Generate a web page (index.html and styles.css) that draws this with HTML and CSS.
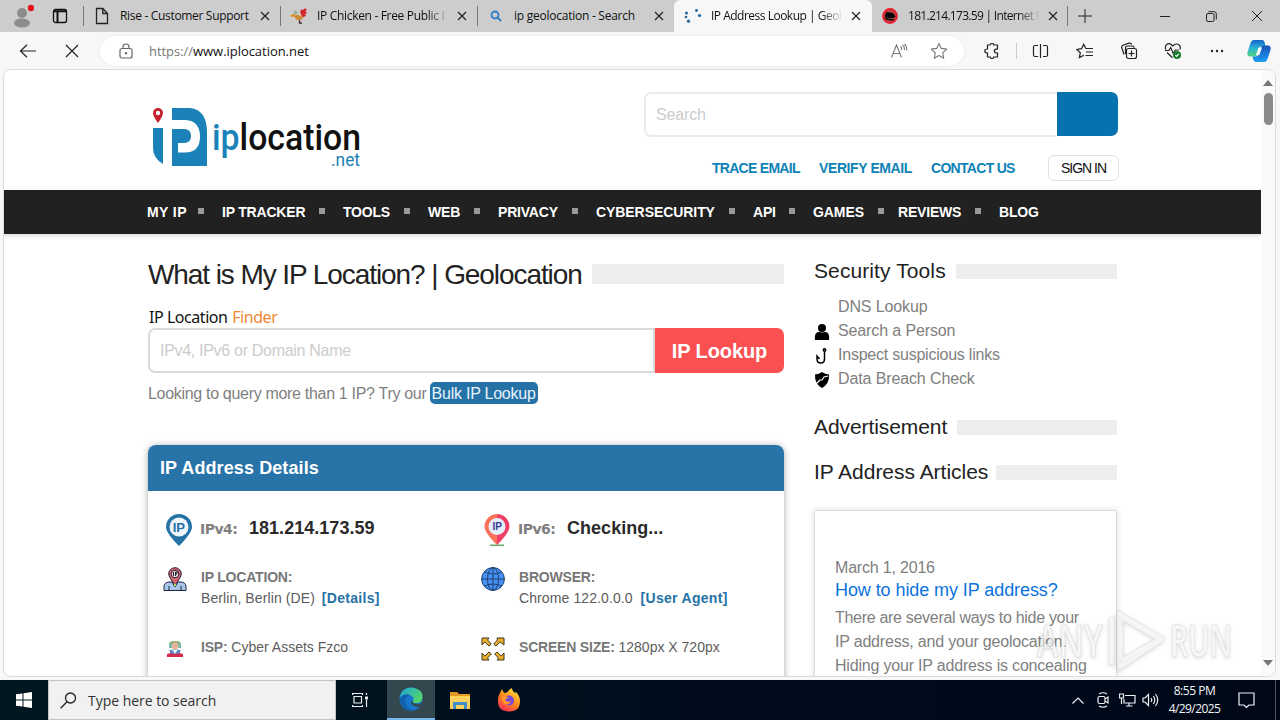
FILE: index.html
```
<!DOCTYPE html>
<html lang="en">
<head>
    <meta charset="utf-8">
    <title>IP Address Lookup | Geolocation</title>
    <link rel="stylesheet" href="styles.css">
</head>
<body>
<div class="tab-bar">
    <div class="tab-tools">
        <svg width="24" height="26" viewBox="0 0 24 26"><circle cx="12" cy="10" r="5" fill="#8d8c8b"/><ellipse cx="12" cy="20" rx="8" ry="4.6" fill="#8d8c8b"/><circle cx="21" cy="5" r="3.2" fill="#e0151c"/></svg>
        <svg width="16" height="16" viewBox="0 0 16 16" fill="none" stroke="#111" stroke-width="1.3"><rect x="1.5" y="1.5" width="13" height="13" rx="2"/><path d="M1.5 3.2h13M5.5 3v11.5" stroke-width="2"/></svg>
    </div>
    <div class="tab">
        <span class="tab-icon"><svg width="14" height="18" viewBox="0 0 14 18" fill="none" stroke="#222" stroke-width="1.3"><path d="M1.5 1.5h6.3l4.7 5v10h-11zM7.8 1.5v5h4.7"/></svg></span>
        <span class="tab-title t1">Rise - Customer Support</span>
        <svg class="x" viewBox="0 0 10 10"><path d="M1 1l8 8M9 1L1 9"/></svg>
    </div>
    <div class="tab">
        <span class="tab-icon"><svg width="18" height="16" viewBox="0 0 18 16"><path d="M4 8l4-1.500 2 1.500 4-3-1 5-3 2.500-4-1z" fill="#cf8a35"/><path d="M10 4.500l1-3 2 .5L14.500.5 17 1l-1.500 2 1.500 2-2 1 1 2-3 1z" fill="#d3222a"/><path d="M0 7.500l5-2v3L2 9z" fill="#e28a1c"/><circle cx="5.500" cy="4.500" r="2" fill="#97b59a"/><path d="M9.500 12v3h2.500" stroke="#40323c" stroke-width="1.300" fill="none"/></svg></span>
        <span class="tab-title fade t1">IP Chicken - Free Public I</span>
        <svg class="x" viewBox="0 0 10 10"><path d="M1 1l8 8M9 1L1 9"/></svg>
    </div>
    <div class="tab">
        <span class="tab-icon"><svg width="12" height="12" viewBox="0 0 12 12" fill="none" stroke="#2f7fc8" stroke-width="1.8"><circle cx="5" cy="5" r="3.5"/><path d="M7.5 7.5l3.5 3.5"/></svg></span>
        <span class="tab-title t2">ip geolocation - Search</span>
        <svg class="x" viewBox="0 0 10 10"><path d="M1 1l8 8M9 1L1 9"/></svg>
    </div>
    <div class="tab active">
        <span class="tab-icon"><svg width="18" height="16" viewBox="0 0 18 16" fill="#22649c"><circle cx="2.5" cy="5" r="1.5"/><circle cx="2" cy="9" r="1.3"/><circle cx="4.5" cy="13.2" r="1.6"/><circle cx="12.5" cy="2.5" r="1.4"/><circle cx="15.5" cy="7.5" r="1.6"/></svg></span>
        <span class="tab-title fade t3">IP Address Lookup | Geol</span>
        <svg class="x" viewBox="0 0 10 10"><path d="M1 1l8 8M9 1L1 9"/></svg>
    </div>
    <div class="tab last-tab">
        <span class="tab-icon"><svg width="16" height="16" viewBox="0 0 16 16"><circle cx="8" cy="8" r="6.800" fill="#a8474d" stroke="#e8202e" stroke-width="2.200"/><path d="M3 7q1-4 4-2.500l4 .5 2.500 3.500q-2 2.500-6 1.500L3 9z" fill="#050505"/><path d="M3 10q4 2.500 9 1.500" stroke="#111" stroke-width="1.500" fill="none"/></svg></span>
        <span class="tab-title fade t4">181.214.173.59 | Internet P</span>
        <svg class="x" viewBox="0 0 10 10"><path d="M1 1l8 8M9 1L1 9"/></svg>
    </div>
    <div class="window-buttons">
        <svg width="14" height="14" viewBox="0 0 14 14"><path d="M0 7h14M7 0v14"/></svg>
        <svg width="10" height="10" viewBox="0 0 10 10"><path d="M0 5.500h10"/></svg>
        <svg width="11" height="11" viewBox="0 0 11 11"><rect x=".5" y="2.500" width="7.500" height="8" rx="1.500"/><path d="M2.500 .7h5.500q2.300 0 2.300 2.300v5.500"/></svg>
        <svg width="10" height="10" viewBox="0 0 10 10"><path d="M0 0l10 10M10 0L0 10"/></svg>
    </div>
</div>

<div class="toolbar">
    <svg class="back" width="18" height="14" viewBox="0 0 18 14"><path d="M1.500 7h15.500M8 .7L1.500 7 8 13.300"/></svg>
    <svg class="stop" width="14" height="14" viewBox="0 0 14 14"><path d="M1 1l12 12M13 1L1 13"/></svg>
    <div class="address">
        <svg width="14" height="16" viewBox="0 0 14 16" fill="none" stroke="#666"><rect x="1" y="5.500" width="12" height="9.500" rx="2"/><path d="M4 5.500V4q0-3 3-3t3 3v1.500"/><circle cx="7" cy="10.300" r=".6" fill="#666"/></svg>
        <span class="url"><span class="scheme">https://</span>www.iplocation.net</span>
        <svg width="18" height="16" viewBox="0 0 18 16" fill="none" stroke="#777" stroke-width="1.100"><path d="M1.500 14.500L6.500 2l5 12.500M3.200 10.500h6.600M10.500 3.500q1.500 1.300 1 3.500M12.500 2q2.500 2 1.800 5M14.500 1q3 3 2 6.500"/></svg>
        <svg width="18" height="18" viewBox="0 0 18 18" fill="none" stroke="#777" stroke-width="1.100" stroke-linejoin="round"><path d="M9 1.500l2.300 4.900 5.400.7-4 3.700 1 5.400L9 13.600l-4.700 2.600 1-5.400-4-3.700 5.400-.7z"/></svg>
    </div>
    <span class="tool"><svg width="16" height="16" viewBox="0 0 16 16"><path d="M3.500 2h2.700q0-1.500 1.800-1.500T9.800 2h3.700v3.800q-3.200 0-3.200 2.200t3.200 2.200V14H9.800q0 1.500-1.800 1.500T6.200 14H3.500v-4Q.8 10 .8 8t2.700-2z"/></svg></span>
    <span class="tool-split"></span>
    <span class="tool"><svg width="17" height="16" viewBox="0 0 17 16"><path d="M6 2.500H3Q1.500 2.500 1.500 4v8q0 1.500 1.500 1.500h3M11 2.500h3q1.500 0 1.500 1.500v8q0 1.500-1.500 1.500h-3M8.500 1v14"/></svg></span>
    <span class="tool favs"><svg width="18" height="16" viewBox="0 0 18 16"><path d="M9.800 5.500L7.700 1.300 5.600 5.700l-4.800.7 3.500 3.300-.9 4.900 4.500-2.400M9.800 5.500h7.200M10 9h7M9.500 12.500H17"/></svg></span>
    <span class="tool"><svg width="18" height="18" viewBox="0 0 18 18"><path d="M4 12.500L2 6.500Q1 4 3.500 3L9 1.200q2-.5 2.800 1.300"/><path d="M5.500 12V6Q5.500 4 7.500 4H12q2 0 2 1.800"/><rect x="6.500" y="6.500" width="10" height="10" rx="2"/><path d="M11.500 8.500v6M8.500 11.500h6"/></svg></span>
    <span class="tool"><svg width="18" height="18" viewBox="0 0 18 18"><path d="M1.800 7.500Q.5 4 3 2.300T8.700 4q3-3 5.700-1.500T16 7.500M3 10.500l5.500 5.200M1 8.500h4l1.700-3 2.600 6 2-3.500h3.500"/><circle cx="13" cy="13" r="4" fill="#187c28" stroke="none"/><path d="M11.300 13l1.200 1.300 2.300-2.500" stroke="#fff"/></svg></span>
    <span class="tool"><svg width="14" height="4" viewBox="0 0 14 4"><g fill="#222" stroke="none"><circle cx="2" cy="2" r="1.200"/><circle cx="7" cy="2" r="1.200"/><circle cx="12" cy="2" r="1.200"/></g></svg></span>
    <span class="tool copilot">
        <svg width="24" height="24" viewBox="0 0 24 24">
            <defs>
                <linearGradient id="cpa" x1="0" y1="0" x2="0" y2="1"><stop offset="0" stop-color="#1565c8"/><stop offset=".5" stop-color="#28b6d4"/><stop offset="1" stop-color="#52d17b"/></linearGradient>
                <linearGradient id="cpb" x1="0" y1="0" x2="0" y2="1"><stop offset="0" stop-color="#1c51b8"/><stop offset="1" stop-color="#1ba0f4"/></linearGradient>
            </defs>
            <path d="M7 1h8q2 0 2.500 2l1 4h-3q-2.500 0-3.100 2.500L10.500 15q-.8 2.500-3 2.500H3Q-.3 17.500.5 13L3.500 4Q4.500 1 7 1z" fill="url(#cpa)" stroke="none"/>
            <path d="M17 23H9q-2 0-2.500-2L5.500 17.500h3q2.500 0 3.200-2.500L13.500 9q.8-2.500 3-2.500H21q3.300 0 2.500 4.500l-3 9q-1 3-3.500 3z" fill="url(#cpb)" stroke="none"/>
            <path d="M11.500 8.500h3.500l-2.700 7.500H9z" fill="#fff" stroke="none"/>
        </svg>
    </span>
</div>

<div class="viewport">
    <div class="page">
        <div class="header">
            <svg class="logo" width="212" height="68" viewBox="0 0 212 68">
                <path d="M1 24h10v36Q1 54 1 44z" fill="#1a82b8"/>
                <path d="M20 4h18q17 2 17 24v34H20z" fill="#1a82b8"/>
                <path d="M20 16h12q16 0 16 16.500T32 48.500h-6V39h6q7 0 7-7t-7-7H20z" fill="#fff"/>
                <path d="M20 25h6v23.500h-6z" fill="#1a82b8"/>
                <path d="M6 4a5 5 0 0 1 5 5q0 3-5 10-5-7-5-10a5 5 0 0 1 5-5z" fill="#c4202d"/>
                <circle cx="6" cy="9" r="2.200" fill="#fff"/>
                <text class="logo-text" x="60" y="46" textLength="149" lengthAdjust="spacingAndGlyphs"><tspan fill="#1a82b8">ip</tspan><tspan fill="#111">location</tspan></text>
                <text class="logo-net" x="179" y="62" textLength="29" lengthAdjust="spacingAndGlyphs">.net</text>
            </svg>
            <div class="header-side">
                <div class="site-search">
                    <span class="site-search-input">Search</span>
                    <span class="site-search-button"></span>
                </div>
                <div class="top-links">
                    <a class="trace">TRACE EMAIL</a>
                    <a class="verify">VERIFY EMAIL</a>
                    <a class="contact">CONTACT US</a>
                    <span class="sign-in">SIGN IN</span>
                </div>
            </div>
        </div>

        <div class="nav">
            <span class="wide">MY IP</span>
            <span>IP TRACKER</span>
            <span>TOOLS</span>
            <span>WEB</span>
            <span>PRIVACY</span>
            <span class="even">CYBERSECURITY</span>
            <span>API</span>
            <span class="near even">GAMES</span>
            <span>REVIEWS</span>
            <span class="last">BLOG</span>
        </div>

        <div class="content">
            <div class="main">
                <div class="heading"><h1>What is My IP Location? | Geolocation</h1></div>
                <div class="finder-label">IP Location <span>Finder</span></div>
                <div class="lookup">
                    <span class="lookup-input">IPv4, IPv6 or Domain Name</span>
                    <span class="lookup-button">IP Lookup</span>
                </div>
                <p class="bulk">Looking to query more than 1 IP? Try our <a>Bulk IP Lookup</a></p>

                <div class="details">
                    <div class="details-title">IP Address Details</div>
                    <div class="details-grid">
                        <div class="ip-row">
                            <svg width="32" height="34" viewBox="0 0 32 34"><path d="M16 1a13 13 0 0 1 13 13q0 6-13 19Q3 20 3 14A13 13 0 0 1 16 1z" fill="#2572a7"/><circle cx="16" cy="14" r="9.500" fill="#eef6fc"/><text class="pin-text" x="9.700" y="18.700" fill="#2572a7">IP</text></svg>
                            <span class="ip-label">IPv4:</span><b>181.214.173.59</b>
                        </div>
                        <div class="ip-row">
                            <svg width="32" height="34" viewBox="0 0 32 34"><path d="M9 32.300h14" stroke="#6fa86c" stroke-width="1.600"/><path d="M16 1a12.500 12.500 0 0 1 12.500 12.500q0 6-12.500 18.500z" fill="#ef3f68"/><path d="M16 1A12.500 12.500 0 0 0 3.500 13.500q0 6 12.500 18.500z" fill="#fa7257"/><circle cx="16" cy="13.500" r="8.500" fill="#e4effb"/><text class="pin-text small" x="11.500" y="17.300" fill="#3b3a94">IP</text></svg>
                            <span class="ip-label">IPv6:</span><b>Checking...</b>
                        </div>
                        <div class="info-row">
                            <svg width="24" height="24" viewBox="0 0 24 24" stroke="#20233d"><path d="M1 23.500v-4q0-4 5-4.500h12q5 .5 5 4.500v4z" fill="#a9c7ea"/><path d="M6 19v4M18 19v4M9 15l3 5 3-5" fill="#f4f7ff"/><path d="M12 .7a6.300 6.300 0 0 1 6.300 6.300q0 3-6.300 11Q5.700 10 5.700 7A6.300 6.300 0 0 1 12 .7z" fill="#d7626c"/><circle cx="12" cy="7" r="3.800" fill="#f7dcdc"/><path d="M10.500 5v4M12.500 9V5h1.500v2h-1.500" fill="none"/><circle cx="12" cy="18" r="1.200" fill="#b4e05b" stroke="none"/></svg>
                            <div><strong>IP LOCATION:</strong><br><span class="loose">Berlin, Berlin (DE)</span> <a>[Details]</a></div>
                        </div>
                        <div class="info-row">
                            <svg width="24" height="24" viewBox="0 0 24 24" fill="none" stroke="#20406f"><circle cx="12" cy="12" r="11.400" fill="#4490f4"/><ellipse cx="12" cy="12" rx="5.500" ry="11.400"/><path d="M12 .6v22.800M.6 12h22.800M3.500 5q8.500 4 17 0M3.500 19q8.500-4 17 0"/></svg>
                            <div><strong>BROWSER:</strong><br><span class="loose">Chrome 122.0.0.0</span> <a class="agent">[User Agent]</a></div>
                        </div>
                        <div class="info-row">
                            <svg width="24" height="24" viewBox="0 0 24 24"><path d="M7 7q-2-3 5-3t5 3z" fill="#8eaa6d"/><path d="M6 6h3v5H6zM15 6h3v5h-3z" fill="#74b9a9"/><circle cx="12" cy="9" r="3.500" fill="#e7b49b"/><path d="M6.500 13q5.500-1 11 0l-1 5h-9z" fill="#5887c2"/><path d="M9.500 13h5l-2.500 4z" fill="#eef1f5"/><path d="M4 17l4-1q4 2 8 0l4 1v3H4z" fill="#d32b4f"/></svg>
                            <div><strong>ISP:</strong> Cyber Assets Fzco</div>
                        </div>
                        <div class="info-row">
                            <svg width="24" height="24" viewBox="0 0 24 24" fill="#edae2b" stroke="#40351c"><path d="M1 1h7L6.500 3l3.800 4L8 9 3.800 5 1 8z"/><path d="M23 1h-7l.5 2-3.800 4L15 9l4.200-4L23 8z"/><path d="M1 23h7l-1.500-2 3.800-4L8 15l-4.200 4L1 16z"/><path d="M23 23h-7l1.500-2-3.800-4 2.300-2 4.200 4 2.800-3z"/></svg>
                            <div><strong>SCREEN SIZE:</strong> 1280px X 720px</div>
                        </div>
                    </div>
                </div>
            </div>

            <div class="sidebar">
                <div class="heading small-heading"><h2>Security Tools</h2></div>
                <ul class="tools">
                    <li><i></i>DNS Lookup</li>
                    <li><i><svg width="16" height="16" viewBox="0 0 16 16"><circle cx="8" cy="4" r="4"/><path d="M1 16q-1-8 4-8.300 3 1.500 6 0 5 .3 4 8.300z"/></svg></i>Search a Person</li>
                    <li class="links"><i><svg width="16" height="16" viewBox="0 0 16 16" fill="none" stroke="#000" stroke-width="1.500"><circle cx="10.500" cy="2" r="1.200"/><path d="M10.500 3.500V11q0 4-3.700 4T3 11.500V8l2.500 3"/></svg></i>Inspect suspicious links</li>
                    <li><i><svg width="16" height="16" viewBox="0 0 16 16"><path d="M8 0q3 2 7 2.500Q15.500 12 8 16 .500 12 1 2.500 5 2 8 0z"/><path d="M14 4l-4 1-2 3-2 0-4 4" fill="none" stroke="#fff" stroke-width="1.200"/></svg></i>Data Breach Check</li>
                </ul>
                <div class="heading small-heading advert"><h2>Advertisement</h2></div>
                <div class="heading small-heading articles"><h2>IP Address Articles</h2></div>
                <div class="article">
                    <div class="date">March 1, 2016</div>
                    <a>How to hide my IP address?</a>
                    <p><span class="narrow">There are several ways to hide your</span><br>IP address, and your geolocation.<br>Hiding your IP address is concealing</p>
                </div>
            </div>
        </div>
    </div>
    <div class="scrollbar">
        <svg width="10" height="6" viewBox="0 0 10 6"><path d="M0 6L5 0l5 6z"/></svg>
        <span class="thumb"></span>
        <svg width="10" height="6" viewBox="0 0 10 6"><path d="M0 0l5 6 5-6z"/></svg>
    </div>
</div>

<!-- watermark over the page corner -->
<svg class="watermark" width="200" height="68" viewBox="0 0 200 68">
    <text x="1" y="50" textLength="66" lengthAdjust="spacingAndGlyphs">ANY</text>
    <path d="M73 58V12l5-3v49zM81 3l47 27v4L84 63l-3-1zM87 14v36l32-18z" fill-rule="evenodd"/>
    <text x="134" y="50" textLength="62" lengthAdjust="spacingAndGlyphs">RUN</text>
</svg>

<div class="taskbar">
    <span class="start"><svg width="16" height="16" viewBox="0 0 16 16" fill="#fff"><path d="M0 2.300l6.500-.9v6.100H0zM7.500 1.200L16 0v7.500H7.500zM0 8.500h6.500v6.100L0 13.700zM7.500 8.500H16V16l-8.500-1.200z"/></svg></span>
    <div class="task-search">
        <svg width="17" height="17" viewBox="0 0 17 17" fill="none" stroke="#222" stroke-width="1.300"><circle cx="10.500" cy="6" r="5"/><path d="M7 9.700L.7 16.300"/></svg>
        <span>Type here to search</span>
    </div>
    <span class="app"><svg width="17" height="16" viewBox="0 0 17 16" fill="none" stroke="#e8edef" stroke-width="1.200"><path d="M.5 3V1M.5 1.500h10M10.500 1v2M2 4.500h7.500v6.500H2zM.5 13v2M.5 14.500h10M10.500 13v2M14.500 1v2M14.500 8v7"/><path d="M13 6h3" stroke-width="3"/></svg></span>
    <span class="app current">
        <svg width="24" height="24" viewBox="0 0 24 24">
            <defs>
                <linearGradient id="edge" x1="0" y1="0" x2="1" y2=".6"><stop offset="0" stop-color="#1ba4df"/><stop offset="1" stop-color="#55d567"/></linearGradient>
            </defs>
            <circle cx="12" cy="12" r="11.500" fill="#1976ce"/>
            <path d="M.7 11Q2 0 13 .5 24 2 23.500 10.500 23 16 17 16q-4 0-3-2 2-4-3-6Q4 6.500.7 11z" fill="url(#edge)"/>
            <path d="M8 10q-3 4 0 9 4 5 10 3.500-6 3-11 .5Q0 18 .7 11 5 5.500 11 8q-2 .5-3 2z" fill="#1263ad"/>
            <path d="M14 14q-1 3 4 3 3 0 5-1.500v2.500q-2.500 2-5 2-5-1-6-4 0-2 2-2z" fill="#344a55"/>
        </svg>
    </span>
    <span class="app"><svg width="22" height="19" viewBox="0 0 22 19"><path d="M1 1h7l2 2h11v4H1z" fill="#e39a24"/><path d="M1 5h20v13H1z" fill="#fcd15b"/><path d="M4 11h14v7h-3v-4H7v4H4z" fill="#3d8fc9"/></svg></span>
    <span class="app">
        <svg width="24" height="24" viewBox="0 0 24 24">
            <defs>
                <linearGradient id="fox" x1=".8" y1="0" x2=".2" y2="1"><stop offset="0" stop-color="#ffe33f"/><stop offset=".5" stop-color="#ff8a1c"/><stop offset="1" stop-color="#f6295c"/></linearGradient>
            </defs>
            <path d="M3 5l2-4 2 4 3-.5Q12 2 14.500 0q1 3 3.500 5l1-1q4 4 4 9 0 10.500-11 10.500T1 13q0-5 2-8z" fill="url(#fox)"/>
            <circle cx="12" cy="12.500" r="5" fill="#7548dc"/><path d="M5 8q5 0 7 2-3 0-4 2 2 3 6 1-1 4-5 3.500T5 8z" fill="#ff9a25"/>
        </svg>
    </span>
    <div class="tray">
        <svg class="chevron" width="12" height="7" viewBox="0 0 12 7"><path d="M.5 6.500L6 1l5.500 5.500"/></svg>
        <svg class="meet" width="12" height="16" viewBox="0 0 12 16"><rect x="1" y="4.500" width="7" height="7" rx="1.500"/><path d="M8 7l3-2v6L8 9M2 2q4-2.500 8 0M2 14q4 2.500 8 0"/></svg>
        <svg class="net" width="17" height="14" viewBox="0 0 17 14"><path d="M6 2.500h10v7.500H5V6M10 10v3M7 13h6.500M.5 1h4v4h-4zM2.500 5v6"/></svg>
        <svg class="sound" width="17" height="14" viewBox="0 0 17 14"><path d="M1 5h2l3.500-3.500v11L3 9H1zM9 5q1.500 2 0 4M11.300 3q3 4 0 8M13.500 1q4.500 6 0 12"/></svg>
        <div class="clock"><span class="time">8:55 PM</span><span class="day">4/29/2025</span></div>
        <svg class="note" width="17" height="17" viewBox="0 0 17 17"><path d="M1 1h15v12h-5l-2.500 2.500L6 13H1z"/></svg>
        <span class="show-desktop"></span>
    </div>
</div>
</body>
</html>
```
FILE: styles.css
```
* {
    box-sizing: border-box;
}
body {
    margin: 0;
    width: 1280px;
    height: 720px;
    overflow: hidden;
    position: relative;
    display: flex;
    flex-direction: column;
    background: #f7f7f7;
    font-family: "Liberation Sans", Arial, sans-serif;
}
svg {
    display: block;
    flex: none;
}
h1, h2, p, ul {
    margin: 0;
    padding: 0;
    font-weight: normal;
}

/* browser tabs */
.tab-bar {
    height: 32px;
    flex: none;
    display: grid;
    grid-template-columns: 83px 197px 197px 197px 198px 195px 1fr;
    background: #cdcdcd;
    font: 12px "Open Sans", sans-serif;
    color: #111;
}
.tab-tools {
    display: flex;
    align-items: center;
    padding-left: 10px;
    gap: 18px;
}
.tab {
    display: flex;
    align-items: center;
    padding-left: 10px;
    background: linear-gradient(#777, #777) 0 6px / 1px 20px no-repeat;
}
.tab-icon {
    width: 18px;
    margin-right: 9px;
    display: flex;
    justify-content: center;
}
.tab-title {
    width: 132px;
    line-height: 20px;
    white-space: nowrap;
    overflow: hidden;
}
.t1 { letter-spacing: -0.32px; }
.t2 { letter-spacing: -0.25px; }
.t3 { letter-spacing: -0.5px; }
.t4 { letter-spacing: -0.7px; }
.fade {
    -webkit-mask-image: linear-gradient(90deg, #000 110px, transparent 132px);
    mask-image: linear-gradient(90deg, #000 110px, transparent 132px);
}
.x {
    width: 10px;
    height: 10px;
    margin-left: 8px;
    stroke: #222;
    stroke-width: 1.2;
}
.tab.active {
    background: #f7f7f7;
    border-radius: 6px 6px 0 0;
}
.tab.last-tab {
    padding-left: 9px;
    background: none;
}
.window-buttons {
    display: flex;
    align-items: center;
    padding-left: 11px;
    background: linear-gradient(#777, #777) 0 6px / 1px 20px no-repeat;
    fill: none;
    stroke: #222;
}
.window-buttons svg:nth-child(2) { margin-left: 68px; }
.window-buttons svg:nth-child(3) { margin-left: 36px; }
.window-buttons svg:nth-child(4) { margin-left: 35px; }

/* address bar */
.toolbar {
    height: 37px;
    flex: none;
    display: flex;
    align-items: center;
    padding-left: 19px;
    fill: none;
    stroke: #222;
    stroke-width: 1.2;
}
.stop {
    margin-left: 28px;
}
.address {
    width: 864px;
    height: 30px;
    margin-left: 21px;
    padding: 0 16px 0 19px;
    display: flex;
    align-items: center;
    border-radius: 15px;
    background: #fff;
    box-shadow: 0 0 2px #ddd;
}
.url {
    flex: 1;
    margin-left: 16px;
    font: 13px "Open Sans", sans-serif;
    letter-spacing: -0.04px;
    color: #111;
}
.scheme {
    color: #777;
}
.address svg:last-child {
    margin-left: 22px;
}
.tool {
    width: 44px;
    display: flex;
    justify-content: center;
}
.address + .tool {
    margin-left: 6px;
}
.tool.favs {
    width: 45px;
}
.tool.copilot {
    width: 40px;
}
.tool-split {
    width: 4px;
    height: 16px;
    background: linear-gradient(#ccc, #ccc) 2px 0 / 1px 16px no-repeat;
}

/* page area */
.viewport {
    height: 608px;
    flex: none;
    margin: 0 4px 0 3px;
    display: flex;
    border: 1px solid #dcdcdc;
    border-radius: 8px;
    overflow: hidden;
    background: #fff;
}
.page {
    width: 1257px;
    height: 606px;
    overflow: hidden;
    color: #808080;
}
.header {
    height: 120px;
    padding: 22px 143px 0 144px;
    display: flex;
    justify-content: space-between;
}
.logo {
    margin: 12px 0 0 4px;
}
.logo-text {
    font: 500 37px Roboto, sans-serif;
}
.logo-net {
    font: 18px Roboto, sans-serif;
    fill: #1a82b8;
}
.header-side {
    width: 474px;
}
.site-search {
    display: flex;
    height: 45px;
}
.site-search-input {
    flex: 1;
    padding-left: 10px;
    border: 2px solid #ececec;
    border-right: 0;
    border-radius: 7px 0 0 7px;
    font-size: 16px;
    line-height: 41px;
    letter-spacing: -0.14px;
    color: #ccc;
}
.site-search-button {
    width: 61px;
    height: 44px;
    border-radius: 0 7px 7px 0;
    background: #0773ae;
}
.top-links {
    display: flex;
    align-items: center;
    justify-content: flex-end;
    margin-top: 18px;
    margin-right: -1px;
    font-size: 14px;
    font-weight: bold;
    color: #0d83b7;
}
.trace { width: 107px; letter-spacing: -0.72px; }
.verify { width: 112px; letter-spacing: -0.4px; }
.contact { width: 117px; letter-spacing: -0.7px; }
.sign-in {
    width: 71px;
    height: 26px;
    border: 1px solid #e2e2e2;
    border-radius: 6px;
    font-weight: normal;
    line-height: 24px;
    letter-spacing: -1px;
    text-align: center;
    color: #111;
}

/* black menu */
.nav {
    height: 44px;
    padding-left: 143px;
    display: grid;
    grid-template-columns: 75px 121px 85px 70px 98px 157px 60px 85px 101px 60px;
    background: #212121;
    box-shadow: 0 2px 4px rgba(0,0,0,0.15);
    font-size: 14px;
    font-weight: bold;
    line-height: 44px;
    letter-spacing: -0.2px;
    color: #fff;
}
.nav span {
    display: flex;
    justify-content: space-between;
    align-items: center;
    white-space: nowrap;
}
.nav span::after {
    content: "";
    width: 6px;
    height: 6px;
    margin: 0 18px 2px 0;
    background: #999;
}
.nav .wide { letter-spacing: 0.4px; }
.nav .even { letter-spacing: -0.07px; }
.nav .near::after { margin-right: 14px; }
.nav .last::after { display: none; }

/* two columns */
.content {
    padding: 0 144px;
    display: grid;
    grid-template-columns: 636px 303px;
    gap: 30px;
}
.heading {
    display: flex;
    align-items: center;
    white-space: nowrap;
}
.heading::after {
    content: "";
    flex: 1;
    background: #eee;
}
.main .heading {
    height: 34px;
    margin-top: 23px;
}
.main .heading::after {
    height: 20px;
    margin-left: 10px;
}
h1 {
    width: 434px;
    padding-top: 2px;
    font-size: 28px;
    line-height: 34px;
    letter-spacing: -1.08px;
    color: #222;
}
.finder-label {
    margin: 15px 0 0 1px;
    font: 16px/22px "Noto Sans", sans-serif;
    letter-spacing: -0.45px;
    color: #111;
}
.finder-label span {
    margin-left: 1px;
    color: #ee8833;
}
.lookup {
    display: flex;
    height: 45px;
}
.lookup-input {
    flex: 1;
    padding-left: 10px;
    border: 2px solid #d9d9d9;
    border-radius: 7px 0 0 7px;
    font-size: 16px;
    line-height: 41px;
    letter-spacing: -0.3px;
    color: #ccc;
}
.lookup-button {
    width: 129px;
    border-radius: 0 7px 7px 0;
    background: #fa5052;
    font-size: 20px;
    font-weight: bold;
    line-height: 46px;
    letter-spacing: -0.1px;
    text-align: center;
    color: #fff;
}
.bulk {
    margin-top: 9px;
    font-size: 16px;
    line-height: 23px;
    letter-spacing: -0.31px;
}
.bulk a {
    display: inline-block;
    height: 22px;
    margin-left: -1px;
    padding: 0 2px;
    border-radius: 5px;
    background: #2572a7;
    letter-spacing: -0.24px;
    color: #e8f3fb;
}
.details {
    height: 300px;
    margin-top: 40px;
    border-radius: 8px 8px 0 0;
    background: #fff;
    box-shadow: 0 1px 7px rgba(0,0,0,0.35);
}
.details-title {
    height: 46px;
    padding-left: 12px;
    border-radius: 8px 8px 0 0;
    background: #2874a9;
    font-size: 18px;
    font-weight: bold;
    line-height: 46px;
    letter-spacing: 0.1px;
    color: #fff;
}
.details-grid {
    padding: 22px 0 0 15px;
    display: grid;
    grid-template-columns: 318px 1fr;
}
.ip-row {
    height: 54px;
    display: flex;
    align-items: flex-start;
}
.ip-row b {
    margin-left: 11px;
    font-size: 18px;
    line-height: 30px;
    letter-spacing: 0.03px;
    color: #2a2a2a;
}
.ip-label {
    width: 38px;
    margin-left: 5px;
    font: bold 14px/32px "DejaVu Sans", sans-serif;
    letter-spacing: -0.5px;
    color: #808080;
}
.pin-text {
    font: bold 13px "Liberation Sans", sans-serif;
}
.pin-text.small {
    font-size: 10px;
}
.info-row {
    height: 70px;
    display: flex;
    gap: 14px;
    font-size: 14px;
    line-height: 21px;
    color: #5c5c5c;
}
.info-row strong {
    color: #777;
    letter-spacing: -0.2px;
}
.info-row a {
    margin-left: 3px;
    font-weight: bold;
    letter-spacing: 0.3px;
    color: #2572a7;
}
.info-row .agent {
    margin-left: 4px;
}
.loose {
    letter-spacing: 0.1px;
}

/* right column */
.small-heading {
    height: 24px;
    margin-top: 25px;
}
.small-heading::after {
    height: 15px;
    margin-left: 10px;
}
h2 {
    font-size: 21px;
    line-height: 24px;
    letter-spacing: 0.1px;
    color: #222;
}
.tools {
    margin: 12px 0 0;
    list-style: none;
    font-size: 16px;
    line-height: 24px;
    letter-spacing: -0.12px;
}
.tools li {
    display: flex;
}
.tools .links {
    letter-spacing: -0.23px;
}
.tools i {
    width: 24px;
    padding-top: 5px;
    fill: #000;
}
.advert {
    margin-top: 24px;
}
.advert h2 {
    letter-spacing: -0.08px;
}
.articles {
    margin-top: 21px;
}
.articles h2 {
    letter-spacing: -0.02px;
    margin-right: -2px;
}
.article {
    height: 200px;
    margin-top: 26px;
    padding: 45px 0 0 20px;
    border: 1px solid #ddd;
    border-radius: 3px;
    box-shadow: 0 0 6px rgba(0,0,0,0.15);
    font-size: 16px;
    line-height: 24px;
    letter-spacing: -0.19px;
}
.article a {
    display: block;
    font-size: 18px;
    line-height: 20px;
    letter-spacing: -0.08px;
    color: #0b73dd;
}
.article p {
    margin-top: 6px;
    white-space: nowrap;
}
.narrow {
    letter-spacing: -0.3px;
}
.scrollbar {
    flex: 1;
    display: flex;
    flex-direction: column;
    align-items: center;
    padding: 10px 0;
    background: #fafafa;
    fill: #777;
}
.thumb {
    width: 9px;
    height: 32px;
    margin: 7px 0 auto;
    border-radius: 5px;
    background: #8a8a8a;
}

.watermark {
    position: absolute;
    left: 1036px;
    top: 607px;
    font: 600 45px "Open Sans", sans-serif;
    fill: rgba(255,255,255,0.6);
    stroke: rgba(190,190,190,0.35);
    filter: drop-shadow(0 1px 2px rgba(0,0,0,0.2));
}

/* taskbar */
.taskbar {
    height: 40px;
    margin-top: auto;
    flex: none;
    display: flex;
    align-items: center;
    background: linear-gradient(90deg, #001721, #000b1b 60%, #000818);
}
.start {
    width: 48px;
    display: flex;
    justify-content: center;
}
.task-search {
    width: 288px;
    height: 40px;
    padding-left: 11px;
    display: flex;
    align-items: center;
    gap: 11px;
    border: 1px solid #c4c4c4;
    background: #f1f1f1;
    font: 14px "Open Sans", sans-serif;
    letter-spacing: -0.03px;
    color: #333;
}
.app {
    width: 49px;
    height: 40px;
    display: flex;
    align-items: center;
    justify-content: center;
}
.task-search + .app {
    width: 51px;
}
.task-search + .app svg {
    margin-right: 3px;
}
.current {
    width: 48px;
    border-bottom: 2px solid #76b9ed;
    background: #33474f;
}
.tray {
    flex: 1;
    height: 40px;
    display: flex;
    align-items: center;
    justify-content: flex-end;
    fill: none;
    stroke: #eef1f4;
    stroke-width: 1.2;
}
.chevron { margin-right: 13px; }
.meet { margin-right: 10px; }
.net { margin-right: 6px; }
.sound { margin-right: 7px; }
.clock {
    width: 57px;
    display: flex;
    flex-direction: column;
    align-items: center;
    font: 12px/18px "Open Sans", sans-serif;
    color: #f2f4f6;
}
.time { letter-spacing: -0.48px; }
.day { letter-spacing: -0.6px; }
.note { margin: 0 20px 0 15px; }
.show-desktop {
    width: 5px;
    height: 40px;
    border-left: 1px solid #4a5160;
}
```
